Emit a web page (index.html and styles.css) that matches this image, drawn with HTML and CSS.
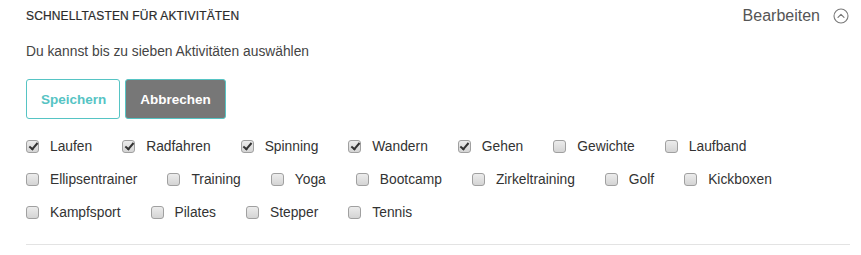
FILE: index.html
```html
<!DOCTYPE html>
<html lang="de">
<head>
<meta charset="utf-8">
<title>Schnelltasten für Aktivitäten</title>
<link rel="stylesheet" href="styles.css">
</head>
<body>
<section class="panel">
  <header class="header">
    <h2 class="title">SCHNELLTASTEN FÜR AKTIVITÄTEN</h2>
    <div class="edit">
      <span class="edit-label">Bearbeiten</span>
      <svg class="edit-icon" width="16" height="16" viewBox="0 0 16 16" aria-hidden="true">
        <circle cx="8" cy="8" r="7" fill="none" stroke="#7a7a7a" stroke-width="1.1"/>
        <path d="M5 9.3 L8 6.3 L11 9.3" fill="none" stroke="#7a7a7a" stroke-width="1.2" stroke-linecap="round" stroke-linejoin="round"/>
      </svg>
    </div>
  </header>
  <p class="subtitle">Du kannst bis zu sieben Aktivitäten auswählen</p>
  <div class="actions">
    <button class="btn btn-save" type="button">Speichern</button>
    <button class="btn btn-cancel" type="button">Abbrechen</button>
  </div>
  <div class="options">
    <label class="opt"><span class="box checked"></span>Laufen</label>
    <label class="opt"><span class="box checked"></span>Radfahren</label>
    <label class="opt"><span class="box checked"></span>Spinning</label>
    <label class="opt"><span class="box checked"></span>Wandern</label>
    <label class="opt"><span class="box checked"></span>Gehen</label>
    <label class="opt"><span class="box"></span>Gewichte</label>
    <label class="opt"><span class="box"></span>Laufband</label>
    <label class="opt"><span class="box"></span>Ellipsentrainer</label>
    <label class="opt"><span class="box"></span>Training</label>
    <label class="opt"><span class="box"></span>Yoga</label>
    <label class="opt"><span class="box"></span>Bootcamp</label>
    <label class="opt"><span class="box"></span>Zirkeltraining</label>
    <label class="opt"><span class="box"></span>Golf</label>
    <label class="opt"><span class="box"></span>Kickboxen</label>
    <label class="opt"><span class="box"></span>Kampfsport</label>
    <label class="opt"><span class="box"></span>Pilates</label>
    <label class="opt"><span class="box"></span>Stepper</label>
    <label class="opt"><span class="box"></span>Tennis</label>
  </div>
  <hr class="divider">
</section>
</body>
</html>
```
FILE: styles.css
```css
html, body {
  margin: 0;
  padding: 0;
  background: #fff;
}
body {
  font-family: "Liberation Sans", Arial, sans-serif;
  color: #333;
}
.panel {
  padding: 0 11px 0 26px;
}
.header {
  display: flex;
  justify-content: space-between;
  align-items: center;
  height: 32px;
}
.title {
  margin: 0;
  font-size: 12px;
  font-weight: normal;
  letter-spacing: 0.15px;
  color: #2b2b2b;
  -webkit-text-stroke: 0.2px #2b2b2b;
}
.edit {
  display: flex;
  align-items: center;
  gap: 13px;
  padding-right: 1px;
}
.edit-label {
  font-size: 16px;
  color: #555;
}
.edit-icon {
  display: block;
}
.subtitle {
  margin: 12px 0 0;
  font-size: 13.8px;
  line-height: 16px;
  color: #444;
}
.actions {
  display: flex;
  gap: 5px;
  margin-top: 19px;
}
.btn {
  height: 40px;
  padding: 0 14px;
  border: 1px solid #56c4c4;
  border-radius: 3px;
  font-family: "Liberation Sans", Arial, sans-serif;
  font-size: 13.5px;
  font-weight: bold;
  cursor: pointer;
}
.btn-save {
  width: 94px;
  background: #fff;
  color: #56c4c4;
}
.btn-cancel {
  width: 101px;
  background: #777;
  color: #fff;
}
.options {
  display: flex;
  flex-wrap: wrap;
  row-gap: 13px;
  margin-top: 17px;
}
.opt {
  display: flex;
  align-items: center;
  height: 20px;
  margin-right: 30px;
  font-size: 13.8px;
  color: #333;
}
.box {
  box-sizing: border-box;
  width: 13px;
  height: 13px;
  margin-right: 11px;
  border: 1px solid #a0a0a0;
  border-radius: 3px;
  background: linear-gradient(#ececec, #d4d4d4);
  position: relative;
}
.box.checked::after {
  content: "";
  position: absolute;
  left: 3.5px;
  top: 0.5px;
  width: 3px;
  height: 7px;
  border: solid #333;
  border-width: 0 2px 2px 0;
  transform: rotate(40deg);
}
.divider {
  margin: 22px 0 0;
  border: 0;
  border-top: 1px solid #e3e3e3;
  height: 0;
}
```
